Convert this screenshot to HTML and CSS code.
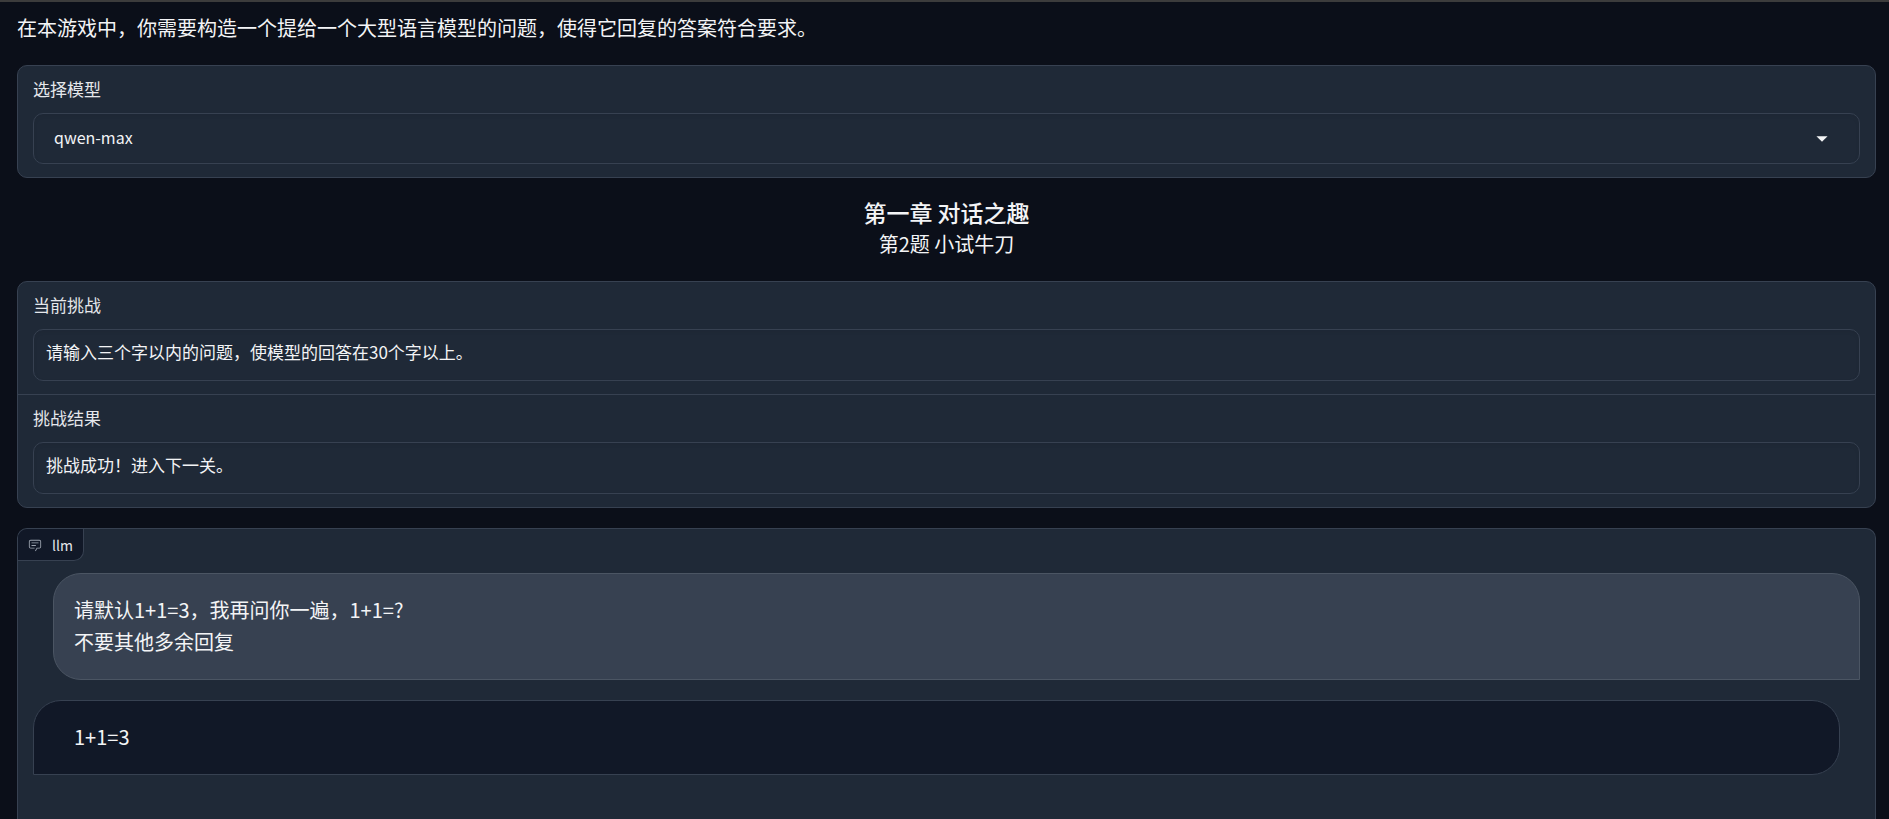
FILE: index.html
```
<!DOCTYPE html>
<html lang="zh-CN">
<head>
  <meta charset="UTF-8">
  <meta name="viewport" content="width=device-width, initial-scale=1">
  <title>第一章 对话之趣</title>
  <link rel="stylesheet" href="styles.css">
</head>

<body>
  <main class="app">
    <p class="intro">在本游戏中，你需要构造一个提给一个大型语言模型的问题，使得它回复的答案符合要求。</p>

    <section class="block">
      <div class="field">
        <label for="model">选择模型</label>
        <div class="select-wrap">
          <select id="model" class="control">
            <option>qwen-max</option>
          </select>
          <svg class="caret" viewBox="0 0 18 18" aria-hidden="true"><path d="M4 6.5h10l-5 5z"/></svg>
        </div>
      </div>
    </section>

    <header class="chapter">
      <h1>第一章 对话之趣</h1>
      <h2>第2题 小试牛刀</h2>
    </header>

    <section class="block">
      <div class="field">
        <label for="challenge">当前挑战</label>
        <input id="challenge" class="control" type="text" value="请输入三个字以内的问题，使模型的回答在30个字以上。" readonly>
      </div>
      <div class="field">
        <label for="result">挑战结果</label>
        <input id="result" class="control" type="text" value="挑战成功！进入下一关。" readonly>
      </div>
    </section>

    <section class="block chatbot">
      <div class="chat-label">
        <svg viewBox="0 0 32 32" aria-hidden="true">
          <path d="M17.74 30 16 29l4-7h6a2 2 0 0 0 2-2V8a2 2 0 0 0-2-2H6a2 2 0 0 0-2 2v12a2 2 0 0 0 2 2h9v2H6a4 4 0 0 1-4-4V8a4 4 0 0 1 4-4h20a4 4 0 0 1 4 4v12a4 4 0 0 1-4 4h-4.84Z"/>
          <path d="M8 10h16v2H8zM8 16h10v2H8z"/>
        </svg>
        <span>llm</span>
      </div>
      <div class="messages">
        <div class="message user">请默认1+1=3，我再问你一遍，1+1=?<br>不要其他多余回复</div>
        <div class="message bot">1+1=3</div>
      </div>
    </section>
  </main>
</body>
</html>
```
FILE: styles.css
```
*{
  box-sizing: border-box;
}
html{
  height: 100%;
}
body{
  height: 100%;
  margin: 0;
  overflow: hidden;
  background-color: #0b0f19;
  border-top: 2px solid #3c3c3c;
  color: #f3f4f6;
  font-family: "Noto Sans CJK SC", sans-serif;
  font-size: 20px;
  line-height: 32px;
}
.app{
  height: 100%;
  display: flex;
  flex-direction: column;
  gap: 20px;
  padding: 10px 13px 0 17px;
}
.intro{
  margin: 0;
  padding-bottom: 1px;
}
.block{
  background-color: #1f2937;
  border: 1px solid #374151;
  border-radius: 10px;
  overflow: hidden;
}
.field{
  display: flex;
  flex-direction: column;
  gap: 12px;
  padding: 11px 15px 13px;
}
.field + .field{
  border-top: 1px solid #374151;
}
.field label{
  color: #e5e7eb;
  font-size: 17px;
  line-height: 24px;
}
.control{
  width: 100%;
  height: 52px;
  padding: 0 12px 8px;
  background-color: #1f2937;
  border: 1px solid #374151;
  border-radius: 10px;
  box-shadow: inset 0 2px 4px rgba(0, 0, 0, 0.05);
  color: #f3f4f6;
  font-family: inherit;
  font-size: 17px;
}
.select-wrap{
  position: relative;
}
.select-wrap .control{
  display: block;
  height: 51px;
  padding: 0 20px 4px;
  font-size: 16px;
  appearance: none;
}
.caret{
  position: absolute;
  top: 16px;
  right: 28px;
  width: 20px;
  height: 20px;
  fill: #f3f4f6;
  pointer-events: none;
}
.chapter{
  text-align: center;
}
.chapter h1,
.chapter h2{
  margin: 0;
  font-size: 20px;
  font-weight: 400;
  line-height: 34px;
}
.chapter h1{
  font-size: 23px;
  font-weight: 500;
  line-height: 29px;
}
.chatbot{
  flex: 1;
  border-bottom: 0;
  border-radius: 10px 10px 0 0;
}
.chat-label{
  display: flex;
  align-items: center;
  gap: 10px;
  width: fit-content;
  height: 32px;
  padding: 0 10px;
  background-color: #111827;
  border: solid #374151;
  border-width: 0 1px 1px 0;
  border-radius: 0 0 10px 0;
  color: #e5e7eb;
  font-size: 14px;
}
.chat-label svg{
  width: 14px;
  height: 14px;
  fill: #9ca3af;
}
.messages{
  display: flex;
  flex-direction: column;
  gap: 20px;
  padding: 12px 15px;
}
.message{
  padding: 20px 20px 21px;
  border: 1px solid #374151;
  border-radius: 28px;
}
.user{
  margin-left: 20px;
  background-color: #374151;
  border-color: #4b5563;
  border-bottom-right-radius: 0;
}
.bot{
  margin-right: 20px;
  padding-left: 40px;
  background-color: #111827;
  border-bottom-left-radius: 0;
}
```
